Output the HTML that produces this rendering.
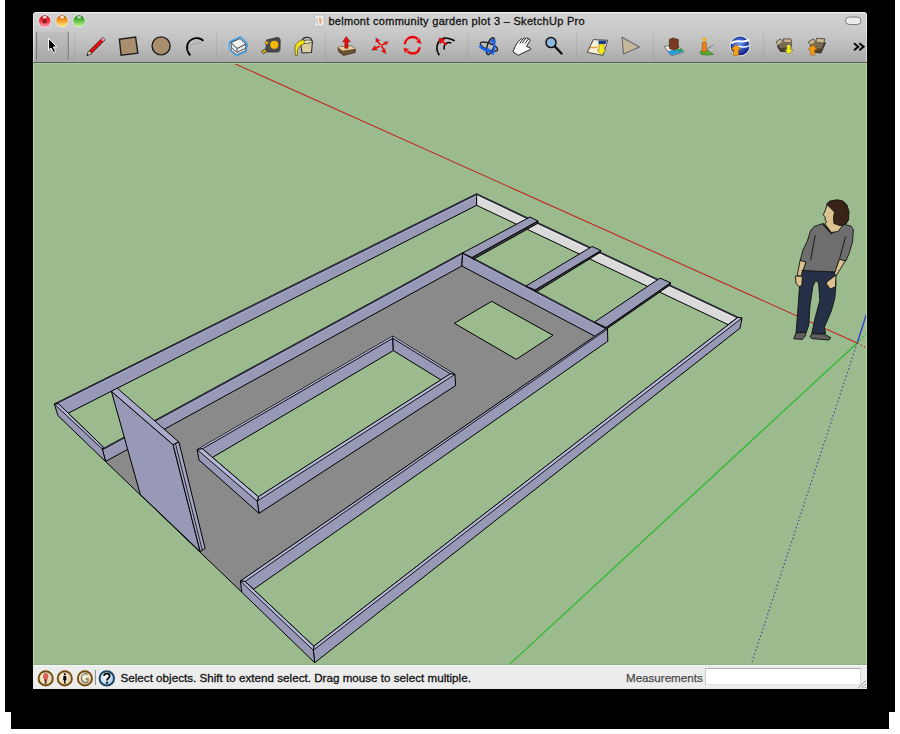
<!DOCTYPE html>
<html><head><meta charset="utf-8">
<style>
html,body{margin:0;padding:0;width:900px;height:734px;overflow:hidden;background:#fff;}
body{position:relative;font-family:"Liberation Sans",sans-serif;}
.blk1{position:absolute;left:5px;top:0;width:890px;height:712px;background:#000;}
.blk2{position:absolute;left:11px;top:712px;width:878px;height:17px;background:#000;}
#win{position:absolute;left:33px;top:12px;width:834px;height:677px;overflow:hidden;border-radius:4px 4px 0 0;background:#ececec;}
#bar{position:absolute;left:0;top:0;width:834px;height:51px;background:linear-gradient(#e6e6e6 0px,#d2d2d2 2px,#c9c9c9 20px,#bababa 36px,#a8a8a8 50px);}
#bar .hl{position:absolute;left:0;top:0;width:834px;height:1px;background:#ededed;}
#bar .bl{position:absolute;left:0;top:50px;width:834px;height:1px;background:#5e5e5e;}
#title{position:absolute;left:295.4px;top:2.8px;font-size:11px;letter-spacing:0.3px;color:#111;white-space:nowrap;-webkit-text-stroke:0.3px #111;}
#status{position:absolute;left:0;top:653px;width:834px;height:24px;background:#ececec;}
#status .tl{position:absolute;left:0;top:0;width:834px;height:1px;background:#f8f6fa;}
#status .t{position:absolute;left:87.5px;top:5.6px;font-size:11.6px;letter-spacing:0.025px;color:#111;white-space:nowrap;-webkit-text-stroke:0.3px #111;}
#status .m{position:absolute;left:593px;top:5.8px;font-size:11.6px;color:#4a4a4a;white-space:nowrap;-webkit-text-stroke:0.25px #4a4a4a;}
#status .box{position:absolute;left:671.5px;top:3px;width:154px;height:15px;background:#fff;border-top:1px solid #b0b0b0;border-left:1px solid #cacaca;border-right:1px solid #d8d8d8;border-bottom:1px solid #e4e4e4;}
svg{position:absolute;left:0;top:0;}
</style></head>
<body>
<div class="blk1"></div>
<div class="blk2"></div>
<div id="win">
  <div id="bar"><div class="hl"></div><div style="position:absolute;left:0;top:0;width:1px;height:50px;background:linear-gradient(#f0f0f0,#d4d4d4);"></div><div style="position:absolute;left:833px;top:0;width:1px;height:50px;background:linear-gradient(#f0f0f0,#d4d4d4);"></div><div class="bl"></div>
    <div id="title">belmont community garden plot 3 – SketchUp Pro</div>
  </div>
  <div id="status"><div class="tl"></div>
    <div class="t">Select objects. Shift to extend select. Drag mouse to select multiple.</div>
    <div class="m">Measurements</div>
    <div class="box"></div>
  </div>
</div>
<svg id="scene" width="900" height="734" viewBox="0 0 900 734">
  <defs><clipPath id="vp"><rect x="33" y="63" width="834" height="602"/></clipPath></defs>
  <g clip-path="url(#vp)">
    <rect x="33" y="63" width="834" height="602" fill="#9bbb8f"/>
<line x1="232.2" y1="62.6" x2="857.2" y2="343.0" stroke="#c4221c" stroke-width="1.05" />
<line x1="857.2" y1="343.0" x2="508.7" y2="665.1" stroke="#2ab82a" stroke-width="1.2" />
<line x1="857.2" y1="343.0" x2="869.0" y2="306.0" stroke="#2a3ad0" stroke-width="1.3" />
<line x1="857.2" y1="343.0" x2="751.0" y2="665.0" stroke="#3a48a8" stroke-width="1.2" stroke-dasharray="1.4,2.4"/>
<line x1="857.2" y1="343.0" x2="867.0" y2="333.0" stroke="#22b322" stroke-width="1.3" stroke-dasharray="1.4,2.4"/>
<line x1="857.2" y1="343.0" x2="867.0" y2="348.5" stroke="#c0201a" stroke-width="1.3" stroke-dasharray="1.4,2.4"/>
<polygon points="102.4,449.1 462.7,252.7 607.5,329.0 607.8,341.2 241.8,592.2 105.5,461.5" fill="#8a8a8a"  />
<line x1="105.5" y1="461.5" x2="241.8" y2="592.2" stroke="#000" stroke-width="1.0" />
<polygon points="454.3,323.3 491.7,301.3 553.0,335.3 516.3,359.3" fill="#9bbb8f" stroke="#000" stroke-width="1.0" stroke-linejoin="round" />
<polygon points="197.2,449.6 392.8,336.1 455.0,374.4 257.2,501.1" fill="#9bbb8f"  />
<polygon points="54.3,404.0 476.6,193.8 476.6,205.3 68.2,413.2" fill="#9799b6" stroke="#000" stroke-width="1.0" stroke-linejoin="round" />
<line x1="54.3" y1="404.5" x2="476.6" y2="194.3" stroke="#30303e" stroke-width="1.8" />
<line x1="54.3" y1="406.1" x2="476.6" y2="195.9" stroke="#b0b3d3" stroke-width="0.7" />
<polygon points="476.6,193.8 737.9,317.3 728.1,324.6 476.6,205.3" fill="#dadada" stroke="#000" stroke-width="1.0" stroke-linejoin="round" />
<line x1="476.6" y1="194.3" x2="737.9" y2="317.8" stroke="#30303e" stroke-width="1.8" />
<line x1="476.6" y1="195.9" x2="737.9" y2="319.4" stroke="#f2f2f2" stroke-width="0.7" />
<polygon points="102.4,449.1 462.7,252.7 461.8,266.0 105.5,461.5" fill="#9799b6" stroke="#000" stroke-width="1.0" stroke-linejoin="round" />
<line x1="102.4" y1="449.6" x2="462.7" y2="253.2" stroke="#30303e" stroke-width="1.8" />
<line x1="102.4" y1="451.2" x2="462.7" y2="254.8" stroke="#b0b3d3" stroke-width="0.7" />
<polygon points="462.7,252.7 607.5,329.0 594.9,336.2 461.8,266.0" fill="#9799b6" stroke="#000" stroke-width="1.0" stroke-linejoin="round" />
<line x1="462.7" y1="253.2" x2="607.5" y2="329.5" stroke="#30303e" stroke-width="1.8" />
<line x1="462.7" y1="254.8" x2="607.5" y2="331.1" stroke="#b0b3d3" stroke-width="0.7" />
<polygon points="472.0,257.5 538.0,221.0 537.5,223.5 473.0,259.5" fill="#44444f" stroke="#000" stroke-width="1.0" stroke-linejoin="round" />
<polygon points="462.5,253.0 530.0,217.0 538.0,221.0 472.0,257.5" fill="#9799b6" stroke="#000" stroke-width="1.0" stroke-linejoin="round" />
<polygon points="535.0,290.0 601.0,250.5 600.0,252.5 536.0,292.0" fill="#44444f" stroke="#000" stroke-width="1.0" stroke-linejoin="round" />
<polygon points="526.0,286.0 592.0,246.5 601.0,250.5 535.0,290.0" fill="#9799b6" stroke="#000" stroke-width="1.0" stroke-linejoin="round" />
<polygon points="606.0,327.5 670.6,282.8 670.0,285.0 606.5,329.0" fill="#44444f" stroke="#000" stroke-width="1.0" stroke-linejoin="round" />
<polygon points="594.5,322.0 660.0,278.1 670.6,282.8 606.0,327.5" fill="#9799b6" stroke="#000" stroke-width="1.0" stroke-linejoin="round" />
<polygon points="737.9,317.3 313.8,646.2 313.3,650.2 314.7,662.7 740.0,328.2 742.0,318.0" fill="#9799b6" stroke="#000" stroke-width="1.0" stroke-linejoin="round" />
<polygon points="737.9,317.3 313.8,646.2 313.3,650.2 742.0,318.0" fill="#b6b8d8" stroke="#000" stroke-width="0.9" stroke-linejoin="round" />
<polygon points="58.6,403.9 103.1,446.9 102.4,449.1 105.5,461.5 57.9,415.5 54.3,404.0" fill="#9799b6" stroke="#000" stroke-width="1.0" stroke-linejoin="round" />
<polygon points="58.6,403.9 103.1,446.9 102.4,449.1 54.3,404.0" fill="#b6b8d8" stroke="#000" stroke-width="0.9" stroke-linejoin="round" />
<polygon points="606.0,328.6 240.4,581.1 245.0,581.5 253.8,589.1 607.8,341.2 607.5,329.0" fill="#9799b6" stroke="#000" stroke-width="1.0" stroke-linejoin="round" />
<polygon points="606.0,328.6 240.4,581.1 245.0,581.5 607.5,329.0" fill="#b6b8d8" stroke="#000" stroke-width="0.9" stroke-linejoin="round" />
<polygon points="245.0,581.5 313.8,646.2 313.3,650.2 314.7,662.7 241.8,592.2 240.4,581.1" fill="#9799b6" stroke="#000" stroke-width="1.0" stroke-linejoin="round" />
<polygon points="245.0,581.5 313.8,646.2 313.3,650.2 240.4,581.1" fill="#b6b8d8" stroke="#000" stroke-width="0.9" stroke-linejoin="round" />
<polygon points="197.2,449.6 392.8,336.1 393.3,350.6 211.2,458.2" fill="#9799b6" stroke="#000" stroke-width="1.0" stroke-linejoin="round" />
<line x1="197.2" y1="450.6" x2="392.8" y2="337.1" stroke="#b6b8d8" stroke-width="1.2" />
<line x1="197.2" y1="451.8" x2="392.8" y2="338.3" stroke="#000" stroke-width="0.9" />
<polygon points="392.8,336.1 455.0,374.4 441.1,380.0 393.3,350.6" fill="#9799b6" stroke="#000" stroke-width="1.0" stroke-linejoin="round" />
<line x1="392.8" y1="337.1" x2="455.0" y2="375.4" stroke="#b6b8d8" stroke-width="1.2" />
<line x1="392.8" y1="338.3" x2="455.0" y2="376.6" stroke="#000" stroke-width="0.9" />
<polygon points="450.4,373.8 258.4,496.8 257.2,501.1 259.0,513.3 455.6,385.6 455.0,374.4" fill="#9799b6" stroke="#000" stroke-width="1.0" stroke-linejoin="round" />
<polygon points="450.4,373.8 258.4,496.8 257.2,501.1 455.0,374.4" fill="#b6b8d8" stroke="#000" stroke-width="0.9" stroke-linejoin="round" />
<polygon points="202.4,448.8 258.4,496.8 257.2,501.1 259.0,513.3 199.0,460.0 197.2,449.6" fill="#9799b6" stroke="#000" stroke-width="1.0" stroke-linejoin="round" />
<polygon points="202.4,448.8 258.4,496.8 257.2,501.1 197.2,449.6" fill="#b6b8d8" stroke="#000" stroke-width="0.9" stroke-linejoin="round" />
<polygon points="111.4,391.4 173.1,444.7 200.2,551.6 140.3,494.5" fill="#9799b6" stroke="#000" stroke-width="1.0" stroke-linejoin="round" />
<polygon points="111.4,391.4 117.2,388.1 178.9,442.0 173.1,444.7" fill="#a9abc8" stroke="#000" stroke-width="1.0" stroke-linejoin="round" />
<polygon points="173.1,444.7 178.9,442.0 205.1,548.3 200.2,551.6" fill="#a4a6c4" stroke="#000" stroke-width="1.0" stroke-linejoin="round" />
<line x1="175.6" y1="444.2" x2="202.3" y2="550.2" stroke="#000" stroke-width="0.8" />
<polygon points="800.3,259.5 806.0,261.5 802.6,276.3 797.2,275.6" fill="#dcc290" stroke="#111" stroke-width="0.9" stroke-linejoin="round"/>
<polygon points="839.5,259.0 845.5,260.5 836.0,276.0 831.5,277.5" fill="#dcc290" stroke="#111" stroke-width="0.9" stroke-linejoin="round"/>
<polygon points="802.4,270.0 834.5,271.3 836.0,283.2 834.8,298.2 831.3,311.0 824.4,327.2 825.6,333.5 811.7,334.0 815.1,317.9 819.8,300.6 818.6,283.2 815.7,280.3 812.8,286.7 809.9,306.4 808.8,324.9 805.9,333.5 796.0,333.0 797.7,312.1 799.5,286.7" fill="#263046" stroke="#111" stroke-width="0.9" stroke-linejoin="round"/>
<polygon points="793.7,338.8 796.0,333.0 804.7,332.4 805.9,335.3 802.4,339.4" fill="#5e5e5e" stroke="#111" stroke-width="0.9" stroke-linejoin="round"/>
<polygon points="809.9,336.5 812.2,333.6 824.4,334.2 830.8,337.6 829.0,340.0 811.7,338.6" fill="#5e5e5e" stroke="#111" stroke-width="0.9" stroke-linejoin="round"/>
<polygon points="814.0,226.6 822.7,223.6 831.4,233.2 843.4,224.2 851.0,226.1 853.4,230.0 852.5,242.0 848.9,254.0 845.8,261.0 839.3,259.2 835.0,272.0 803.0,270.5 806.0,262.0 800.2,260.5 803.0,250.0 807.4,240.8 810.5,231.0" fill="#6e6e6e" stroke="#111" stroke-width="0.9" stroke-linejoin="round"/>
<polyline points="815.1,235.3 810.7,260.4" fill="none" stroke="#111" stroke-width="0.9"/>
<polyline points="845.6,236.4 839.6,258.6" fill="none" stroke="#111" stroke-width="0.9"/>
<polyline points="822.7,223.6 831.4,233.2 843.4,224.2" fill="none" stroke="#222" stroke-width="2"/>
<polygon points="795.4,276.2 802.4,276.2 801.8,285.5 798.9,286.7 796.0,283.2" fill="#dcc290" stroke="#111" stroke-width="0.9" stroke-linejoin="round"/>
<polygon points="826.7,282.0 836.0,275.0 835.5,286.7 830.2,289.0 826.7,284.3" fill="#dcc290" stroke="#111" stroke-width="0.9" stroke-linejoin="round"/>
<polygon points="827.0,205.0 833.0,205.0 836.0,213.0 834.5,221.0 840.0,225.5 843.4,224.5 838.0,231.5 831.4,232.5 825.0,224.0 826.5,221.5 824.9,219.2 825.5,217.5 823.2,214.8 825.0,211.0 826.0,208.0" fill="#dcc290" stroke="#111" stroke-width="0.9" stroke-linejoin="round"/>
<polygon points="826.5,204.0 830.0,201.0 837.0,199.8 843.0,201.0 847.0,205.0 849.0,212.0 848.5,220.0 846.0,224.0 840.0,225.5 834.0,223.5 833.5,218.0 834.5,212.0 829.5,207.0" fill="#3a2418" stroke="#111" stroke-width="0.9" stroke-linejoin="round"/>

    <rect x="33" y="63" width="1" height="602" fill="#b2dca2"/><rect x="866" y="63" width="1" height="602" fill="#b2dca2"/><rect x="33" y="63" width="834" height="1" fill="#a6cc98"/><rect x="33" y="664" width="834" height="1" fill="#8db383"/>
  </g>
</svg>
<svg id="chrome" width="900" height="734" viewBox="0 0 900 734" style="position:absolute;left:0;top:0">
<defs>
  <linearGradient id="tlR" x1="0" y1="0" x2="0" y2="1"><stop offset="0" stop-color="#9a1016"/><stop offset="0.35" stop-color="#f0202a"/><stop offset="1" stop-color="#ff9aa8"/></linearGradient>
  <linearGradient id="tlY" x1="0" y1="0" x2="0" y2="1"><stop offset="0" stop-color="#b04a08"/><stop offset="0.35" stop-color="#f08a18"/><stop offset="1" stop-color="#fff080"/></linearGradient>
  <linearGradient id="tlG" x1="0" y1="0" x2="0" y2="1"><stop offset="0" stop-color="#1a6a10"/><stop offset="0.35" stop-color="#48b030"/><stop offset="1" stop-color="#c8f898"/></linearGradient>
  <linearGradient id="btnv" x1="0" y1="0" x2="0" y2="1"><stop offset="0" stop-color="#bfbfbf"/><stop offset="1" stop-color="#a9a9a9"/></linearGradient><linearGradient id="btnE" x1="0" y1="0" x2="1" y2="0"><stop offset="0" stop-color="#9a9a9a" stop-opacity="0.3"/><stop offset="0.5" stop-color="#6e6e6e"/><stop offset="1" stop-color="#9a9a9a" stop-opacity="0.3"/></linearGradient><linearGradient id="btn" x1="0" y1="0" x2="1" y2="0"><stop offset="0" stop-color="#8c8c8c"/><stop offset="0.08" stop-color="#b9b9b9"/><stop offset="0.92" stop-color="#b9b9b9"/><stop offset="1" stop-color="#8c8c8c"/></linearGradient>
  <radialGradient id="cream" cx="40%" cy="35%" r="70%"><stop offset="0" stop-color="#fbf6e6"/><stop offset="1" stop-color="#d9c89c"/></radialGradient>
  <radialGradient id="helpg" cx="40%" cy="35%" r="70%"><stop offset="0" stop-color="#ffffff"/><stop offset="1" stop-color="#9cc4e8"/></radialGradient>
  <radialGradient id="globe" cx="45%" cy="40%" r="65%"><stop offset="0" stop-color="#6a9af0"/><stop offset="0.6" stop-color="#2a4ab8"/><stop offset="1" stop-color="#0a1670"/></radialGradient>
</defs>
<!-- traffic lights -->
<g>
<circle cx="44.7" cy="21.1" r="6.6" fill="#dfe6e6"/>
<circle cx="62" cy="21.1" r="6.6" fill="#dfe6e6"/>
<circle cx="79.1" cy="21.1" r="6.6" fill="#e2e2e6"/>
<circle cx="44.7" cy="21.1" r="5.8" fill="url(#tlR)"/>
<circle cx="44.7" cy="21.3" r="2.3" fill="#8a1a22"/>
<circle cx="62" cy="21.1" r="5.8" fill="url(#tlY)"/>
<circle cx="79.1" cy="21.1" r="5.8" fill="url(#tlG)"/>
<ellipse cx="44.7" cy="17.2" rx="2.2" ry="1.3" fill="#fff" opacity="0.85"/>
<ellipse cx="62" cy="17.2" rx="2.2" ry="1.3" fill="#fff" opacity="0.85"/>
<ellipse cx="79.1" cy="17.2" rx="2.2" ry="1.3" fill="#fff" opacity="0.7"/>
</g>
<!-- capsule -->
<rect x="845.5" y="17" width="15.5" height="7.5" rx="3.75" fill="#ececec" stroke="#6f6f6f" stroke-width="0.9"/>
<!-- title doc icon -->
<rect x="314.6" y="15" width="9.4" height="11.2" rx="0.6" fill="#e9eef0" stroke="#b4b4b4" stroke-width="0.8"/>
<path d="M319.5 17 C322 18.5 322.5 22.5 320 24.5 C319.5 22 318.5 20 319.5 17 Z" fill="#eea46a"/>
<path d="M317.5 18.5 C316 20.5 316.2 23 318.5 24.5" fill="none" stroke="#9aa0a4" stroke-width="0.9"/>
<!-- pressed select button -->
<rect x="36" y="31.7" width="32.5" height="28" fill="url(#btnv)"/>
<rect x="35.6" y="31.7" width="2" height="28" fill="url(#btnE)"/>
<rect x="67.2" y="31.7" width="2" height="28" fill="url(#btnE)"/>
<path d="M48.5 38.2 L48.5 50.1 L51 48 L53.5 52.5 L55.7 51.3 L53.3 47 L56.8 46.8 Z" fill="#000" stroke="#fff" stroke-width="1" stroke-linejoin="round"/>
<!-- separators -->
<g stroke="#8a8a8a" stroke-width="0.8" stroke-dasharray="0.9,1.6" opacity="0.8">
<line x1="74.5" y1="33" x2="74.5" y2="59"/>
<line x1="216.5" y1="33" x2="216.5" y2="59"/>
<line x1="325.5" y1="33" x2="325.5" y2="59"/>
<line x1="467.5" y1="33" x2="467.5" y2="59"/>
<line x1="576.5" y1="33" x2="576.5" y2="59"/>
<line x1="653.5" y1="33" x2="653.5" y2="59"/>
<line x1="763.5" y1="33" x2="763.5" y2="59"/>
</g>
<!-- pencil -->
<line x1="90.5" y1="52" x2="104.2" y2="38.3" stroke="#3a2020" stroke-width="3.9" stroke-linecap="butt"/>
<line x1="90.5" y1="52" x2="102.5" y2="40" stroke="#ee0c0c" stroke-width="2.6"/>
<line x1="102" y1="40.5" x2="104" y2="38.5" stroke="#f088c0" stroke-width="2.6"/>
<path d="M86.8 55.6 L88.6 50.8 L91.8 54 Z" fill="#e8d8a0" stroke="#222" stroke-width="0.6"/>
<path d="M86.8 55.6 L87.5 53.6 L88.9 55 Z" fill="#000"/>
<line x1="94" y1="54.5" x2="103.5" y2="50.5" stroke="#b89a9a" stroke-width="0.6"/>
<!-- rectangle -->
<path d="M119.4 39.2 L135.6 37 L137.8 53.1 L121.1 55.3 Z" fill="#a88e6c" stroke="#1e1e1e" stroke-width="1.4"/>
<!-- circle -->
<circle cx="161.1" cy="45.9" r="9" fill="#a88e6c" stroke="#1e1e1e" stroke-width="1.4"/>
<!-- arc -->
<path d="M190.3 55.3 C185.5 50 186 42 192.5 39 C196 37.5 201 38 203.3 40.8" fill="none" stroke="#000" stroke-width="1.9"/>
<path d="M188 51 C189 45 195 42.5 201 42.8" fill="none" stroke="#999" stroke-width="0.8"/>
<!-- component -->
<path d="M229.5 42 L240.5 36.8 L247.5 43.5 L246 51.5 L236.5 55.8 L229.5 49.5 Z" fill="#dfe8ee" stroke="#40a4e8" stroke-width="1.5" stroke-linejoin="round"/>
<path d="M231 42.5 L240 38.5 L246 44 L237 48.5 Z" fill="#f2f2f2" stroke="#2a2a2a" stroke-width="0.9"/>
<path d="M231 42.5 L231.5 48 L237 52.5 L237 48.5 M237 52.5 L245.5 48.5 L246 44" fill="none" stroke="#3a3a3a" stroke-width="0.8"/>
<path d="M231.5 48 L237 52.5 L245.5 48.5 L245.5 50.5 L236.8 54.5 L231.5 50.5 Z" fill="#f6f6f6" stroke="#333" stroke-width="0.6"/>
<!-- tape measure -->
<path d="M261.5 51.2 L268.5 46.8 L270.5 49.5 L263.3 53.8 Z" fill="#f2c010" stroke="#2a2a2a" stroke-width="0.7"/>
<path d="M263.5 50.8 L264.5 52.3 M265.5 49.6 L266.5 51.1 M267.5 48.4 L268.5 49.9" stroke="#222" stroke-width="0.6"/>
<path d="M266.5 40 L276.5 37.6 C279 37.2 280.2 38.5 280.2 40.5 L280 49.5 C280 51 279 52 277.5 52 L268.5 52 C267 52 266 51 266 49.5 Z" fill="#4c4c50" stroke="#262626" stroke-width="0.7"/>
<circle cx="274.3" cy="44.8" r="4.1" fill="#f4b808"/>
<circle cx="266.8" cy="42.8" r="1.7" fill="#f4b808" stroke="#3a3a3a" stroke-width="0.4"/>
<!-- paint bucket -->
<path d="M300.5 42.5 L312.5 41 L311.5 52.5 L302 53 Z" fill="#d8cca0" stroke="#2e2e2e" stroke-width="1.1" stroke-linejoin="round"/>
<ellipse cx="306.5" cy="41.8" rx="6" ry="1.6" transform="rotate(-7 306.5 41.8)" fill="#efe6c4" stroke="#333" stroke-width="0.7"/>
<path d="M301.5 42 C302 36.5 310 35.5 312 40.5" fill="none" stroke="#222" stroke-width="1.2"/>
<path d="M303.8 39.5 C299 40.5 295.5 43.5 295 47.5 L295.3 55.5 L297.2 55.5 L297.5 50.5 C298 47 301 45 304.5 43.5 Z" fill="#f2e210" stroke="#3a3a20" stroke-width="0.6"/>
<!-- push pull -->
<path d="M337.9 47.3 L351 45.9 L355.2 48.7 L355.2 52.5 L343.5 55.5 L338.5 51.5 Z" fill="#6a5030" stroke="#3a2a1a" stroke-width="0.7"/>
<path d="M337.9 47.3 L351 45.9 L355.2 48.7 L342.7 50.8 Z" fill="#e8d2a0"/>
<path d="M342.6 41.7 L346.2 36.6 L350.4 41.7 L348 41.7 L348 48.3 L344.8 48.3 L344.8 41.7 Z" fill="#e81010" stroke="#7a1010" stroke-width="0.5"/>
<!-- move -->
<g fill="#ee0a0a" stroke="#8ab8b8" stroke-width="0.7" stroke-linejoin="round">
<path d="M375.5 37.3 L380.7 40.5 L375.5 42.8 Z"/>
<path d="M388.9 41.2 L383.3 41.4 L386.3 45.8 Z"/>
<path d="M386.3 54.6 L385.6 48.1 L380.4 51 Z"/>
<path d="M370.9 50.4 L374.8 45.1 L378.1 50.7 Z"/>
</g>
<path d="M377 40.5 L384 49.5 M385 43.5 L376 48" stroke="#ee0a0a" stroke-width="1.6"/>
<circle cx="380.4" cy="45.6" r="0.9" fill="#c8e0e0"/>
<!-- rotate -->
<g stroke="#a8d0d0" stroke-width="0.6" fill="#ee0a0a" stroke-linejoin="round">
<path d="M404.7 44.3 C405.5 39.5 409 37 412.5 37 C415 37 416.8 38 418 39.5" fill="none" stroke="#ee0a0a" stroke-width="2.3"/>
<path d="M415.8 42.2 L419.7 37.4 L421.9 44.5 Z"/>
<path d="M419.7 47.3 C419 51.5 416 53.5 412.5 53.5 C410 53.5 408.3 52.5 407.3 51.3" fill="none" stroke="#ee0a0a" stroke-width="2.3"/>
<path d="M402.9 47.6 L409.5 48.6 L405 53.9 Z"/>
</g>
<!-- follow me -->
<path d="M439.3 55.3 C436.5 51 436.3 46 438.5 42 C441 38 446.5 36.5 454.7 40.7" fill="none" stroke="#000" stroke-width="1.6"/>
<path d="M444.3 49.7 C443.8 47 444.3 44.5 446 43.3 C447.5 42.3 449.5 42.3 451.3 43" fill="none" stroke="#000" stroke-width="1.5"/>
<line x1="441" y1="40.5" x2="446.7" y2="44.7" stroke="#ee0a0a" stroke-width="1.8"/>
<path d="M438.7 38 L445.3 39.3 L440 44 Z" fill="#ee0a0a" stroke="#9a2a2a" stroke-width="0.4"/>
<!-- orbit -->
<ellipse cx="489" cy="46.6" rx="9.3" ry="3.3" transform="rotate(22 489 46.6)" fill="none" stroke="#262626" stroke-width="1.5"/>
<ellipse cx="490.5" cy="46.2" rx="3.3" ry="8.8" transform="rotate(18 490.5 46.2)" fill="none" stroke="#262626" stroke-width="1.5"/>
<path d="M479.8 45.5 C481.5 48.5 485 50.2 488.5 50.8" fill="none" stroke="#1a66f0" stroke-width="2.6"/>
<path d="M487.5 47.5 L492 51.2 L487 53.8 Z" fill="#1a66f0"/>
<path d="M492.3 54.5 C494.8 50.5 494.8 45 493 41.5" fill="none" stroke="#1a66f0" stroke-width="2.4"/>
<path d="M490 42.5 L492.2 37.8 L496.3 41.8 Z" fill="#1a66f0"/>
<!-- pan hand -->
<path d="M513 51.8 C514.3 48.2 515.8 44.5 518.3 41.5 L520.8 39.2 C521.4 38.5 522.6 38.7 522.3 39.8 L523.6 38.3 C524.2 37.6 525.3 37.9 525 39 L526.7 38.1 C527.3 37.6 528.6 38 528.2 39.1 L529.6 39.2 C530.4 39.5 530.2 40.6 529.6 41.3 L526.4 46.5 L530.4 48.1 C531.1 48.6 530.9 49.6 530 49.7 L523.6 52.6 L518.3 55.3 Z" fill="#fbfbfb" stroke="#151515" stroke-width="0.9" stroke-linejoin="round"/>
<path d="M522.3 39.8 L519.8 43.5 M525 39 L522.3 43.2 M528.2 39.1 L525 43.5" stroke="#151515" stroke-width="0.9"/>
<!-- zoom -->
<line x1="554.5" y1="46" x2="561.5" y2="53.5" stroke="#111" stroke-width="2.4" stroke-linecap="round"/>
<circle cx="551" cy="42.6" r="5" fill="#8ab8e0" stroke="#111" stroke-width="1.5"/>
<!-- previous -->
<path d="M587.3 52.4 L593.3 39.6 L607.7 40.3 L603.1 55.4 Z" fill="#f6f0d8" stroke="#3a3a3a" stroke-width="0.9"/>
<path d="M598.5 40.5 L606.5 40.8 L605.5 44 L598.5 44 Z" fill="#1a3a8a"/>
<path d="M590 47.5 L597.5 47.5" stroke="#e8a030" stroke-width="1.4"/>
<path d="M599 44 L604 44 L604 50 L606 50 L601.5 55 L597 50 L599 50 Z" fill="#f4ec10" stroke="#6a6a20" stroke-width="0.5"/>
<!-- tan shape -->
<path d="M622 37.3 L639.4 47.1 L623.5 53.9 Z" fill="#c9b99c" stroke="#6a6a6a" stroke-width="1.1" stroke-linejoin="round"/>
<!-- get view -->
<path d="M664.4 46.4 L676 44.5 L683.9 52 L671.1 55.9 Z" fill="#f4f0e0" stroke="#555" stroke-width="0.8"/>
<path d="M667.5 51 L680 49 L683 52 L671 55.5 Z" fill="#2a9ad8"/>
<path d="M674 50 L682 48.5 L683.5 51.5 Z" fill="#2aa040"/>
<path d="M669.4 39.5 L673 38 L678.3 39.5 L678.3 48.5 L673.5 50 L669.4 48.5 Z" fill="#7a3a20" stroke="#3a1a10" stroke-width="0.6"/>
<!-- place person -->
<path d="M700 52.5 C701 49.5 705 49 708 50.5 L713.5 54.5 L707 55 L701.5 54.5 Z" fill="#4ab02a" stroke="#2a6a1a" stroke-width="0.6"/>
<line x1="707" y1="49" x2="713" y2="45" stroke="#8a8a8a" stroke-width="1.4"/>
<rect x="702.2" y="42" width="4.2" height="10" rx="1" fill="#f08010" stroke="#8a4a10" stroke-width="0.5"/>
<circle cx="704.3" cy="39.5" r="1.9" fill="#f4b010"/>
<!-- globe -->
<circle cx="740" cy="45.9" r="9.2" fill="url(#globe)" stroke="#0a1a60" stroke-width="0.6"/>
<circle cx="740" cy="45.9" r="10" fill="none" stroke="#f0f0f0" stroke-width="1" opacity="0.8"/><path d="M731.5 43.5 C736 37.5 742.5 45 749 39.5" fill="none" stroke="#fff" stroke-width="2"/>
<path d="M733 48.5 C738 43.5 744.5 50 749.3 45.5" fill="none" stroke="#fff" stroke-width="1.5"/>
<path d="M736 44.5 L741 49.5 L738.5 49.5 L738.5 55.5 L733.5 55.5 L733.5 49.5 L731 49.5 Z" fill="#f4a010" stroke="#a05a10" stroke-width="0.5"/>
<!-- box down -->
<path d="M777.2 46 L791.4 44 L790.1 51.8 L780.4 51.3 Z" fill="#4a4232" stroke="#1e1e1e" stroke-width="0.8" stroke-linejoin="round"/>
<path d="M775.9 42.1 L780.4 38.9 L783 42.1 L778.5 45.3 Z" fill="#cbb58a" stroke="#2a2a2a" stroke-width="0.7"/>
<path d="M783 38.9 L790.7 38.9 L792 42.7 L784.3 42.7 Z" fill="#cbb58a" stroke="#2a2a2a" stroke-width="0.7"/>
<path d="M778.5 45.3 L783 42.1 L784.3 42.7 L791.5 43 L790 47 L780 48 Z" fill="#7a6c50"/>
<path d="M786.8 44.7 L790.7 44.7 L790.7 49.8 L793.3 49.8 L788.8 54.5 L784.6 49.8 L786.8 49.8 Z" fill="#f8f400" stroke="#50508a" stroke-width="0.5"/>
<!-- box up -->
<path d="M810.5 45.5 L825.5 42.7 L821 53.1 L812.5 52 Z" fill="#4a4232" stroke="#1e1e1e" stroke-width="0.8" stroke-linejoin="round"/>
<path d="M808.1 42.1 L813.3 38.9 L815.9 42.1 L810.7 45.3 Z" fill="#cbb58a" stroke="#2a2a2a" stroke-width="0.7"/>
<path d="M816.5 38.2 L824.9 38.9 L823.6 43.4 L815.9 42.1 Z" fill="#cbb58a" stroke="#2a2a2a" stroke-width="0.7"/>
<path d="M813 45 L816 42.5 L823.5 43.6 L821.5 48.5 L815 48.5 Z" fill="#7a6c50"/>
<path d="M812.6 44.6 L817.3 49.8 L814.7 49.8 L814.7 55.1 L810.7 55.1 L810.7 49.8 L808 49.8 Z" fill="#f89a08" stroke="#8a5010" stroke-width="0.5"/>
<!-- chevrons -->
<path d="M854 43.3 L858.3 46.7 L854 50.2 M859.3 43.3 L863.6 46.7 L859.3 50.2" fill="none" stroke="#000" stroke-width="1.9"/>
<!-- status icons -->
<g transform="translate(0,0.3)">
<circle cx="45.7" cy="678.1" r="7.1" fill="url(#cream)" stroke="#744c10" stroke-width="1.9"/>
<path d="M45.7 683.6 L44.3 678.5 C42.8 676.5 43.2 673.2 45.7 673.1 C48.2 673.2 48.6 676.5 47.1 678.5 Z" fill="#f25a5a" stroke="#7a1a1a" stroke-width="0.5"/>
<line x1="45.7" y1="679" x2="45.7" y2="684" stroke="#222" stroke-width="0.9"/>
<circle cx="64.8" cy="678.1" r="7.1" fill="url(#cream)" stroke="#744c10" stroke-width="1.9"/>
<circle cx="64.8" cy="674" r="1.1" fill="#000"/>
<path d="M63.4 675.6 L66.2 675.6 L66.4 679.8 L65.5 680.3 L65.4 683.5 L64.2 683.5 L64.1 680.3 L63.2 679.8 Z" fill="#000"/>
<circle cx="84.9" cy="678.1" r="7.1" fill="url(#cream)" stroke="#744c10" stroke-width="1.9"/>
<path d="M87.6 674.3 C85 672.3 81.4 673.8 81.4 678 C81.4 682.3 85.6 683.3 88 681.3 L88 678.6 L85.6 678.6" fill="none" stroke="#6a6a60" stroke-width="1.1"/>
<line x1="95.4" y1="669.7" x2="95.4" y2="684.7" stroke="#8a8a8a" stroke-width="1"/>
<circle cx="106.8" cy="678.1" r="7.2" fill="url(#helpg)" stroke="#1c4866" stroke-width="2"/>
<path d="M104.1 675.6 C104.1 672.6 109.7 672.6 109.7 675.6 C109.7 677.6 107 677.9 107 680.2" fill="none" stroke="#000" stroke-width="1.7"/>
<rect x="106.1" y="681.4" width="1.9" height="1.9" fill="#000"/>
</g>
<!-- resize grip -->
<path d="M858.3 688 L865.8 680.5 M861.8 688 L865.8 684" stroke="#707070" stroke-width="0.8"/><path d="M859.5 688 L865.8 681.7 M863 688 L865.8 685.2" stroke="#fafafa" stroke-width="0.6"/><rect x="865" y="687" width="1" height="1" fill="#777"/>
</svg>

</body></html>
